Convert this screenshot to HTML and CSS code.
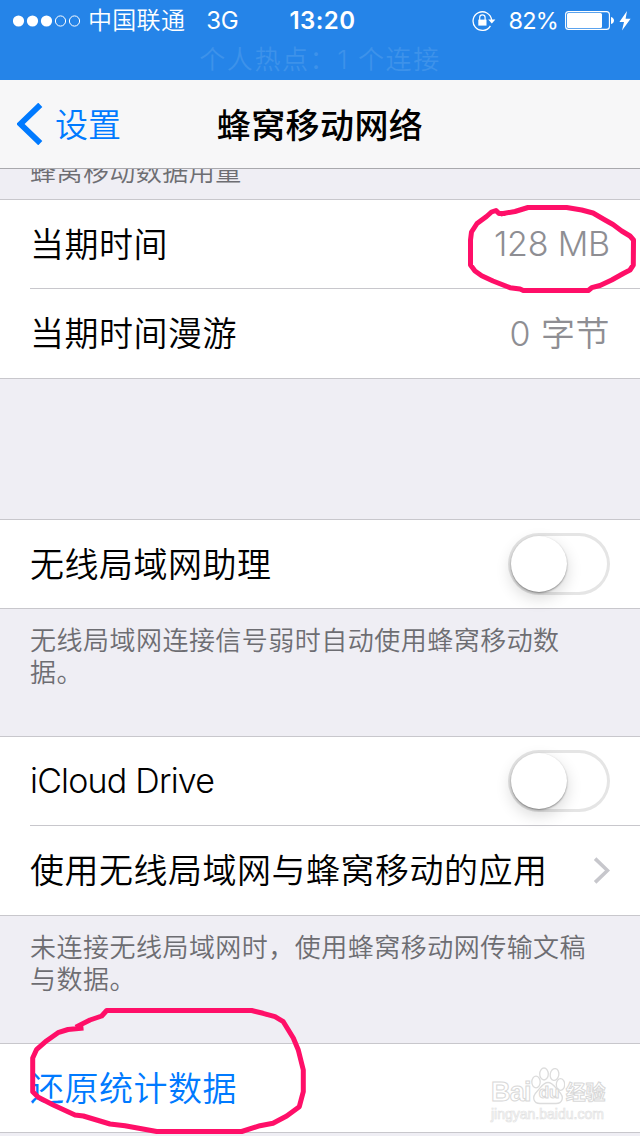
FILE: index.html
```html
<!DOCTYPE html>
<html lang="zh-CN">
<head>
  <meta charset="UTF-8" />
  <meta name="viewport" content="width=device-width, initial-scale=1.0" />
  <title>蜂窝移动网络</title>
  <link rel="stylesheet" href="styles.css">
</head>
<body>
  <div class="screen">
    <header class="status">
      <div class="status-row">
        <div class="left">
          <svg class="signal" width="68" height="12" viewBox="0 0 68 12">
            <g fill="#fff">
              <circle cx="5.5" cy="6" r="5.6" />
              <circle cx="19.5" cy="6" r="5.6" />
              <circle cx="33.5" cy="6" r="5.6" />
            </g>
            <g fill="none" stroke="#fff" stroke-width="1">
              <circle cx="47.5" cy="6" r="5.1" />
              <circle cx="61.5" cy="6" r="5.1" />
            </g>
          </svg>
          <span class="carrier">中国联通</span>
          <span class="network">3G</span>
        </div>
        <div class="time">13:20</div>
        <div class="right">
          <svg class="lock" width="24" height="22" viewBox="0 0 24 22">
            <path d="M18.4 15.8A9.3 9.3 0 1 1 19.6 10" fill="none" stroke="#fff" stroke-width="1.3" />
            <path d="M16.2 9.5h7.2l-3.6 4z" fill="#fff" />
            <rect x="6.3" y="9.6" width="8.2" height="6" fill="#fff" />
            <path d="M7.7 10V7.6a2.7 2.7 0 0 1 5.4 0V10" fill="none" stroke="#fff" stroke-width="1.2" />
          </svg>
          <span class="percent">82%</span>
          <svg class="battery" width="50" height="20" viewBox="0 0 50 20">
            <rect x="0.6" y="0.6" width="43.8" height="17.8" rx="3" fill="none" stroke="#fff" stroke-width="1.1" />
            <rect x="2" y="2" width="35" height="15" rx="1.5" fill="#fff" />
            <path d="M46 6c4 1 4 6 0 7z" fill="#fff" />
          </svg>
          <svg class="bolt" width="12" height="20" viewBox="0 0 12 20">
            <path d="M8 0L0.4 11H5L3 19.5 11.6 7.8H6.6z" fill="#fff" />
          </svg>
        </div>
      </div>
      <div class="hotspot">个人热点：<span>1 个连接</span></div>
    </header>

    <nav class="navbar">
      <a class="back" href="#">
        <svg width="26" height="42" viewBox="0 0 26 42">
          <path d="M23.3 1.8L3.5 21l19.8 19.2" fill="none" stroke="#007aff" stroke-width="5.8" />
        </svg>
        <span>设置</span>
      </a>
      <h1>蜂窝移动网络</h1>
    </nav>

    <main>
      <div class="section-title"><span>蜂窝移动数据用量</span></div>

      <section class="group">
        <div class="row">
          <span class="label">当期时间</span>
          <span class="value latin">128 MB</span>
        </div>
        <div class="row">
          <span class="label">当期时间漫游</span>
          <span class="value">0 字节</span>
        </div>
      </section>

      <div class="spacer"></div>

      <section class="group">
        <div class="row">
          <span class="label">无线局域网助理</span>
          <div class="switch"></div>
        </div>
      </section>
      <p class="note">无线局域网连接信号弱时自动使用蜂窝移动数<br>据。</p>

      <section class="group">
        <div class="row">
          <span class="label latin">iCloud Drive</span>
          <div class="switch"></div>
        </div>
        <div class="row">
          <span class="label">使用无线局域网与蜂窝移动的应用</span>
          <svg class="chevron" width="17" height="27" viewBox="0 0 17 27">
            <path d="M2.1 1.6L14.5 13.5 2.1 25.4" fill="none" stroke="#c7c7cc" stroke-width="3.6" />
          </svg>
        </div>
      </section>
      <p class="note">未连接无线局域网时，使用蜂窝移动网传输文稿<br>与数据。</p>

      <section class="group">
        <div class="row">
          <a class="label" href="#">还原统计数据</a>
        </div>
      </section>
    </main>

    <!-- watermark -->
    <div class="watermark">
      <div class="brand">
        <span class="bai">Bai</span>
        <span class="paw">
          <svg width="34" height="38" viewBox="0 0 34 38">
            <g fill="#fff" stroke="#dcdcdc" stroke-width="1.3">
              <ellipse cx="5" cy="15" rx="4.2" ry="5.8" />
              <ellipse cx="13" cy="7" rx="4.3" ry="6" />
              <ellipse cx="23.5" cy="7.5" rx="4.3" ry="6" transform="rotate(10 23.5 7.5)" />
              <ellipse cx="29.5" cy="17.5" rx="4.2" ry="5.8" />
              <path d="M17 15.5c5 0 7 5 11 9 6 6 3 12-3 12H9c-6 0-9-6-3-12 4-4 6-9 11-9z" />
            </g>
          </svg>
          <b>du</b>
        </span>
        <span class="jingyan">经验</span>
      </div>
      <div class="site">jingyan.baidu.com</div>
    </div>

    <!-- hand drawn marks -->
    <svg class="marks" width="640" height="1136" viewBox="0 0 640 1136">
      <g fill="none" stroke="#ff0f68" stroke-width="5" stroke-linejoin="round" stroke-linecap="square">
        <path d="M503 213.5L499 213.5 496 210.5 491.5 212 486.5 216.5 477 223.5 471.5 232 470.5 240V265L475 271 481.7 275.7 493 281 510 287.7 520 289 523.3 290.5H588.3L591.7 287.7 600 285.5 611.7 280 623.3 273.5 630 270 633.3 265 633.5 240 630 236 621.7 231 613 224.5 605 220 593 213 581.7 210 566.7 207.5H528L515 211.5 503 213.5" />
        <path d="M81 1028.3L68 1029.5 58 1032.7 46.7 1040.7 36.7 1049.3 32.7 1058V1091.7L38.3 1097.3 53.3 1105 75 1115 83.3 1116 110 1124 125 1125.7 156.7 1131.5H241.7L260 1125.7 273 1123.3 286.7 1116 299.3 1106.7 303.3 1091.7V1070L298.3 1050 293.3 1038 283.3 1021.7 275 1016.7 263 1013.3 251.7 1010.5H106.7L101.7 1016 90 1020 78 1026" />
      </g>
    </svg>
  </div>
</body>
</html>
```

FILE: styles.css
```css
:root {
  --blue: #007aff;
  --bar-color: #2584e8;
  --bg-color: #efeef4;
  --line-color: #c8c7cc;
}

* {
  box-sizing: border-box;
  margin: 0;
  padding: 0;
}

body {
  font-family: Inter, "Noto Sans CJK SC", sans-serif;
  background-color: var(--bg-color);
  color: #000;
}

a {
  color: var(--blue);
  text-decoration: none;
}

.screen {
  position: relative;
  width: 640px;
  height: 1136px;
  overflow: hidden;
}

/* status bar */
.status {
  height: 80px;
  background-color: var(--bar-color);
  color: white;
}

.status-row {
  display: grid;
  grid-template-columns: 1fr auto 1fr;
  align-items: center;
  height: 41px;
  padding: 0 9px 0 13px;
  font-size: 24px;
  line-height: 41px;
}

.left,
.right {
  display: flex;
  align-items: center;
}

.right {
  justify-content: flex-end;
}

.carrier {
  margin-left: 7px;
  font-weight: 350;
  letter-spacing: 0.3px;
}

.network {
  margin-left: 21px;
  letter-spacing: -0.3px;
}

.time {
  padding-left: 1px;
  font-weight: 600;
  letter-spacing: 0.4px;
}

.percent {
  margin: 0 7px 0 12px;
  font-size: 23.5px;
  letter-spacing: -0.8px;
}

.bolt {
  margin-left: 4px;
}

.hotspot {
  height: 39px;
  line-height: 37px;
  text-align: center;
  font-size: 26px;
  letter-spacing: 1.6px;
  font-weight: 350;
  color: #3d92ea;
}

/* navigation bar */
.navbar {
  display: grid;
  grid-template-columns: 1fr auto 1fr;
  align-items: center;
  height: 89px;
  padding: 0 17px;
  background-color: #f7f7f8;
  border-bottom: 1px solid #a9a9ad;
}

.back {
  display: flex;
  align-items: center;
  gap: 12px;
  font-size: 33px;
  font-weight: 350;
}

.back span,
.navbar h1 {
  padding-bottom: 2px;
}

.navbar h1 {
  font-size: 34px;
  font-weight: 500;
  letter-spacing: 0.4px;
}

/* list */
.section-title {
  height: 30px;
  padding-left: 30px;
  overflow: hidden;
  font-size: 26px;
  font-weight: 350;
  letter-spacing: 0.45px;
  color: #6d6d72;
}

.section-title span {
  display: block;
  margin-top: -15px;
  line-height: 36px;
}

.group {
  background-color: white;
  border-top: 1px solid var(--line-color);
  border-bottom: 1px solid var(--line-color);
}

.row {
  display: flex;
  justify-content: space-between;
  align-items: center;
  height: 88px;
  margin-left: 30px;
  padding-right: 30px;
  font-size: 34px;
  font-weight: 350;
  letter-spacing: 0.5px;
}

.row + .row {
  height: 90px;
  border-top: 1px solid var(--line-color);
}

.label,
.value {
  padding-bottom: 4px;
}

.latin {
  padding-bottom: 2px;
  letter-spacing: -0.8px;
}

.value {
  color: #8e8e93;
}

.value.latin {
  letter-spacing: -0.2px;
}

.spacer {
  height: 140px;
}

.note {
  height: 127px;
  padding: 16px 30px 0;
  font-size: 26px;
  font-weight: 350;
  line-height: 32px;
  letter-spacing: 0.48px;
  color: #6d6d72;
}

.switch {
  width: 102px;
  height: 62px;
  padding: 3px;
  border-radius: 31px;
  background-color: white;
  box-shadow: inset 0 0 0 3px #e5e5e5;
}

.switch::before {
  content: "";
  display: block;
  width: 56px;
  height: 56px;
  border-radius: 50%;
  background-color: white;
  box-shadow: 0 1px 2px rgba(0, 0, 0, 0.4), 0 6px 16px rgba(0, 0, 0, 0.16);
}

/* overlays */
.watermark {
  position: absolute;
  left: 491px;
  top: 1067px;
  width: 116px;
  color: white;
  font-family: "Liberation Sans", "Noto Sans CJK SC", sans-serif;
  white-space: nowrap;
  -webkit-text-stroke: 1px #d8d8d8;
}

.brand {
  display: flex;
  align-items: flex-end;
  height: 38px;
  font-weight: bold;
}

.bai {
  font-size: 27px;
  line-height: 32px;
  margin-bottom: -3px;
  letter-spacing: -0.8px;
}

.paw {
  position: relative;
  flex: none;
  height: 38px;
}

.paw b {
  position: absolute;
  left: 8px;
  bottom: 2px;
  font-size: 17px;
  line-height: 20px;
}

.jingyan {
  margin-left: 1px;
  font-size: 20px;
  line-height: 24px;
}

.site {
  font-size: 14px;
  line-height: 18px;
  -webkit-text-stroke: 0.7px #e2e2e2;
}

.marks {
  position: absolute;
  left: 0;
  top: 0;
}
```
